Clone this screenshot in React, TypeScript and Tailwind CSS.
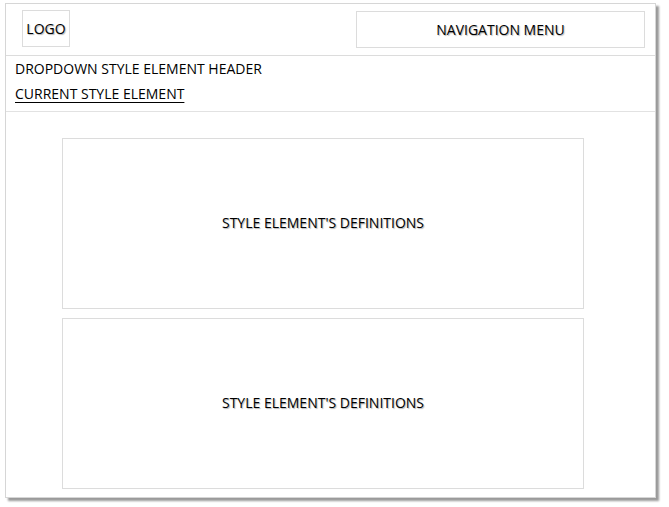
const font = { fontFamily: '"Open Sans", "Noto Sans", sans-serif' };

function DefinitionCard() {
  return (
    <div className="flex h-[171px] w-[522px] items-center justify-center border border-[#dcdcdc] bg-white">
      <span className="-mt-[2px] text-[14px] text-black [text-shadow:1px_1px_1px_#b5b5b5]">
        STYLE ELEMENT'S DEFINITIONS
      </span>
    </div>
  );
}

export default function App() {
  return (
    <div className="h-[507px] w-[669px] bg-white pl-[5px] pt-[3px]" style={font}>
      <div className="flex h-[495px] w-[651px] flex-col border border-[#d6d6d6] bg-white shadow-[3px_3px_2px_#9a9a9a]">
        <header className="flex h-[52px] items-start justify-between border-b border-[#dcdcdc] pl-[16px] pr-[10px] pt-[6px]">
          <div className="flex h-[37px] w-[48px] items-center justify-center border border-[#dcdcdc]">
            <span className="text-[14px] text-black [text-shadow:1px_1px_1px_#b5b5b5]">LOGO</span>
          </div>
          <div className="mt-[1px] flex h-[37px] w-[289px] items-center justify-center border border-[#dcdcdc]">
            <span className="-mt-[1px] text-[14px] text-black [text-shadow:1px_1px_1px_#b5b5b5]">NAVIGATION MENU</span>
          </div>
        </header>
        <div className="flex h-[56px] flex-col border-b border-[#e2e2e2] pl-[9px] pt-[2px]">
          <span className="text-[14px] leading-[22px] text-black">DROPDOWN STYLE ELEMENT HEADER</span>
          <span className="mt-[3px] text-[14px] leading-[22px] text-black underline underline-offset-[3px]">
            CURRENT STYLE ELEMENT
          </span>
        </div>
        <div className="flex flex-col gap-[9px] pl-[56px] pt-[26px]">
          <DefinitionCard />
          <DefinitionCard />
        </div>
      </div>
    </div>
  );
}
